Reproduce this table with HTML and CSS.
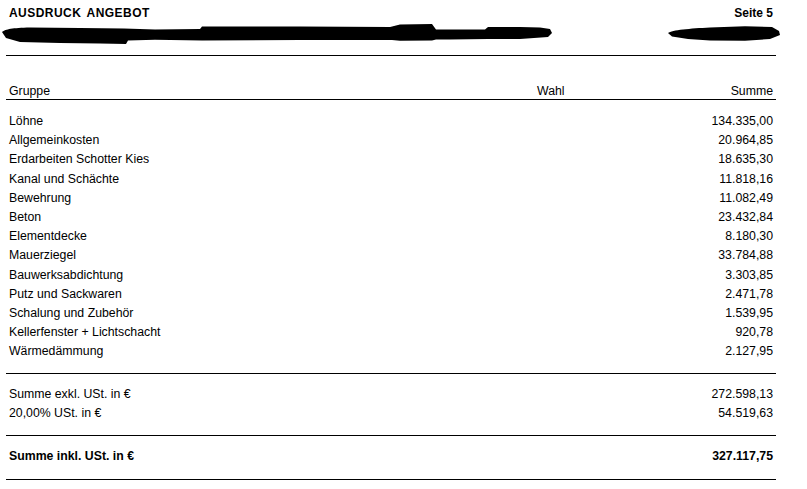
FILE: index.html
```html
<!DOCTYPE html>
<html lang="de">
<head>
    <meta charset="UTF-8">
    <title>Ausdruck Angebot</title>
    <link rel="stylesheet" href="styles.css">
</head>
<body>
    <div class="blatt">
        <header class="kopf">
            <div class="titel-zeile">
                <span class="titel">AUSDRUCK ANGEBOT</span>
                <span class="seite">Seite 5</span>
            </div>
            <!-- geschwärzte Adresszeile -->
            <svg class="geschwaerzt" viewBox="0 0 807 26" width="807" height="26">
                <path d="M2 12 C6 9 12 8 30 7.5 L80 8 L124 8.5 L155 9.5 L200 9 L202 6.5 L300 6.5 L390 7 L400 4.5 L432 4 L436 9.5 L485 9.5 L488 7 L520 7 L540 7.5 L550 9 L552 13 L548 17 L520 19 L488 19 L450 19.5 L436 19.5 L432 20.5 L400 20.7 L392 20 L300 20 L202 20.5 L155 19.7 L128 20.5 L126 24 L100 23.5 L60 23 L20 22 L6 18 Z" />
                <path d="M668 13 C672 10 690 8.5 710 7.5 L745 6.3 L772 7 L779 11 L780 15 L770 19 L745 20.7 L710 20.5 L688 19 L672 16.5 Z" />
            </svg>
        </header>

        <div class="zeile kopfzeile">
            <span>Gruppe</span>
            <span>Wahl</span>
            <span class="betrag">Summe</span>
        </div>

        <div class="gruppen">
            <div class="zeile"><span>Löhne</span><span></span><span class="betrag">134.335,00</span></div>
            <div class="zeile"><span>Allgemeinkosten</span><span></span><span class="betrag">20.964,85</span></div>
            <div class="zeile"><span>Erdarbeiten Schotter Kies</span><span></span><span class="betrag">18.635,30</span></div>
            <div class="zeile"><span>Kanal und Schächte</span><span></span><span class="betrag">11.818,16</span></div>
            <div class="zeile"><span>Bewehrung</span><span></span><span class="betrag">11.082,49</span></div>
            <div class="zeile"><span>Beton</span><span></span><span class="betrag">23.432,84</span></div>
            <div class="zeile"><span>Elementdecke</span><span></span><span class="betrag">8.180,30</span></div>
            <div class="zeile"><span>Mauerziegel</span><span></span><span class="betrag">33.784,88</span></div>
            <div class="zeile"><span>Bauwerksabdichtung</span><span></span><span class="betrag">3.303,85</span></div>
            <div class="zeile"><span>Putz und Sackwaren</span><span></span><span class="betrag">2.471,78</span></div>
            <div class="zeile"><span>Schalung und Zubehör</span><span></span><span class="betrag">1.539,95</span></div>
            <div class="zeile"><span>Kellerfenster + Lichtschacht</span><span></span><span class="betrag">920,78</span></div>
            <div class="zeile"><span>Wärmedämmung</span><span></span><span class="betrag">2.127,95</span></div>
        </div>

        <div class="summen">
            <div class="zeile"><span>Summe exkl. USt. in €</span><span></span><span class="betrag">272.598,13</span></div>
            <div class="zeile"><span>20,00% USt. in €</span><span></span><span class="betrag">54.519,63</span></div>
        </div>

        <div class="gesamt">
            <div class="zeile"><span>Summe inkl. USt. in €</span><span></span><span class="betrag">327.117,75</span></div>
        </div>
    </div>
</body>
</html>
```

FILE: styles.css
```css
body {
    margin: 0;
    background: #fff;
    color: #000;
    font-family: "Liberation Sans", Arial, sans-serif;
    font-size: 12.3px;
}
.blatt {
    width: 770px;
    margin-left: 6px;
}
.kopf {
    border-bottom: 1px solid #000;
    padding-top: 6px;
    padding-bottom: 9px;
}
.titel-zeile {
    display: flex;
    justify-content: space-between;
    padding: 0 3px;
    line-height: 14px;
    font-weight: bold;
    font-size: 12px;
}
.titel {
    letter-spacing: 0.45px;
    word-spacing: 2px;
}
.geschwaerzt {
    display: block;
    margin-left: -6px;
    fill: #000;
}
.zeile {
    display: grid;
    grid-template-columns: 528px 1fr auto;
    padding: 0 3px;
    line-height: 19.2px;
}
.betrag {
    text-align: right;
}
.kopfzeile {
    padding-top: 27px;
    line-height: 16px;
    border-bottom: 1px solid #000;
}
.gruppen {
    padding-top: 12px;
    padding-bottom: 11px;
    border-bottom: 1px solid #000;
}
.summen {
    padding-top: 11px;
    padding-bottom: 12px;
    border-bottom: 1px solid #000;
}
.summen .zeile {
    line-height: 19.3px;
}
.gesamt {
    padding-top: 11px;
    padding-bottom: 13px;
    border-bottom: 1px solid #000;
    font-weight: bold;
}
```
